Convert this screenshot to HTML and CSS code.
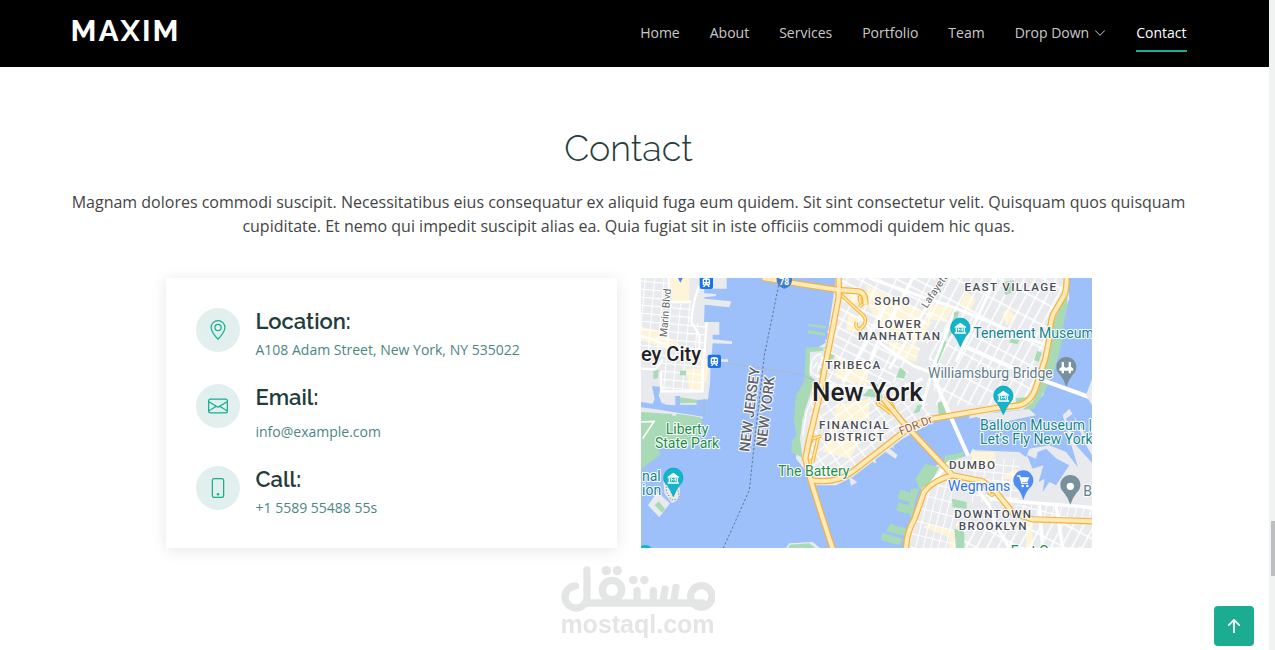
FILE: index.html
```html
<!DOCTYPE html>
<html lang="en">
<head>
    <meta charset="UTF-8">
    <meta name="viewport" content="width=device-width, initial-scale=1.0">
    <title>Maxim - Contact</title>
    <link rel="stylesheet" href="styles.css">
</head>
<body>
<div class="page">
    <header class="header">
        <div class="container header-inner">
            <a href="#" class="logo">MAXIM</a>
            <nav class="navbar">
                <a href="#hero">Home</a>
                <a href="#about">About</a>
                <a href="#services">Services</a>
                <a href="#portfolio">Portfolio</a>
                <a href="#team">Team</a>
                <a href="#more">Drop Down
                    <svg class="chevron" viewBox="0 0 16 16" fill="currentColor"><path d="M1.646 4.646a.5.5 0 0 1 .708 0L8 10.293l5.646-5.647a.5.5 0 0 1 .708.708l-6 6a.5.5 0 0 1-.708 0l-6-6a.5.5 0 0 1 0-.708z"/></svg>
                </a>
                <a href="#contact" class="active">Contact</a>
            </nav>
        </div>
    </header>

    <main>
        <section id="contact" class="contact container">
            <div class="section-title">
                <h2>Contact</h2>
                <p>Magnam dolores commodi suscipit. Necessitatibus eius consequatur ex aliquid fuga eum quidem. Sit sint consectetur velit. Quisquam quos quisquam cupiditate. Et nemo qui impedit suscipit alias ea. Quia fugiat sit in iste officiis commodi quidem hic quas.</p>
            </div>

            <div class="row">
                <div class="info">
                    <div class="info-item">
                        <span class="icon"><svg viewBox="0 0 16 16" fill="currentColor"><path d="M12.166 8.94c-.524 1.062-1.234 2.12-1.96 3.07A31.493 31.493 0 0 1 8 14.58a31.481 31.481 0 0 1-2.206-2.57c-.726-.95-1.436-2.008-1.96-3.07C3.304 7.867 3 6.862 3 6a5 5 0 0 1 10 0c0 .862-.305 1.867-.834 2.94zM8 16s6-5.686 6-10A6 6 0 0 0 2 6c0 4.314 6 10 6 10z"/><path d="M8 8a2 2 0 1 1 0-4 2 2 0 0 1 0 4zm0 1a3 3 0 1 0 0-6 3 3 0 0 0 0 6z"/></svg></span>
                        <div>
                            <h4>Location:</h4>
                            <p>A108 Adam Street, New York, NY 535022</p>
                        </div>
                    </div>
                    <div class="info-item">
                        <span class="icon"><svg viewBox="0 0 16 16" fill="currentColor"><path d="M0 4a2 2 0 0 1 2-2h12a2 2 0 0 1 2 2v8a2 2 0 0 1-2 2H2a2 2 0 0 1-2-2V4zm2-1a1 1 0 0 0-1 1v.217l7 4.2 7-4.2V4a1 1 0 0 0-1-1H2zm13 2.383-4.708 2.825L15 11.105V5.383zm-.034 6.876-5.64-3.471L8 9.583l-1.326-.795-5.64 3.47A1 1 0 0 0 2 13h12a1 1 0 0 0 .966-.741zM1 11.105l4.708-2.897L1 5.383v5.722z"/></svg></span>
                        <div>
                            <h4>Email:</h4>
                            <p class="mail"><a href="mailto:info@example.com">info@example.com</a></p>
                        </div>
                    </div>
                    <div class="info-item">
                        <span class="icon"><svg viewBox="0 0 16 16" fill="currentColor"><path d="M11 1a1 1 0 0 1 1 1v12a1 1 0 0 1-1 1H5a1 1 0 0 1-1-1V2a1 1 0 0 1 1-1h6zM5 0a2 2 0 0 0-2 2v12a2 2 0 0 0 2 2h6a2 2 0 0 0 2-2V2a2 2 0 0 0-2-2H5z"/><path d="M8 14a1 1 0 1 0 0-2 1 1 0 0 0 0 2z"/></svg></span>
                        <div>
                            <h4>Call:</h4>
                            <p>+1 5589 55488 55s</p>
                        </div>
                    </div>
                </div>

                <svg class="map" viewBox="15 18 1353 810" preserveAspectRatio="xMidYMid slice">
                    <defs>
                        <pattern id="gridA" width="44" height="26" patternUnits="userSpaceOnUse" patternTransform="rotate(27)"><path d="M0 0H44M0 0V26" stroke="#fff" stroke-width="8" fill="none"/></pattern>
                        <pattern id="gridB" width="28" height="62" patternUnits="userSpaceOnUse" patternTransform="rotate(28)"><path d="M0 0H28M0 0V62" stroke="#fff" stroke-width="9" fill="none"/></pattern>
                        <pattern id="gridC" width="38" height="26" patternUnits="userSpaceOnUse" patternTransform="rotate(-36)"><path d="M0 0H38M0 0V26" stroke="#fff" stroke-width="7" fill="none"/></pattern>
                        <pattern id="gridD" width="28" height="24" patternUnits="userSpaceOnUse" patternTransform="rotate(5)"><path d="M0 0H28M0 0V24" stroke="#fff" stroke-width="6" fill="none"/></pattern>
                        <pattern id="gridE" width="22" height="40" patternUnits="userSpaceOnUse" patternTransform="rotate(14)"><path d="M0 0H22M0 0V40" stroke="#fff" stroke-width="6" fill="none"/></pattern>
                        <clipPath id="mh"><path d="M612 18H1280L1282 60 1238 150 1232 220 1200 310 1170 390 1130 400 880 440 800 480 640 605 560 625 510 600 490 540 500 420 530 330 560 240z"/></clipPath>
                        <clipPath id="bk"><path d="M812 828 826 760 870 660 930 615 1000 620 1010 560 1150 560 1160 690 1368 700V828z"/></clipPath>
                        <g id="highways" fill="none" stroke-linejoin="round">
                            <path d="M380 18Q500 38 608 54L668 58Q690 62 688 98"/>
                            <path d="M608 18V75L592 160 572 260 548 385 520 500 508 560 524 625Q560 740 590 830"/>
                            <path d="M524 625Q600 636 648 600L790 490Q840 450 890 440L1080 408 1150 400Q1184 390 1198 352L1228 260 1240 200Q1242 150 1252 126L1285 70Q1292 50 1292 18"/>
                            <path d="M740 378 800 450 950 610 1040 628 1080 660 1132 724 1190 742 1368 748"/>
                            <path d="M950 610Q890 625 864 660L836 740Q812 780 810 830"/>
                        </g>
                        <g id="ramps" fill="none">
                            <path d="M612 66 680 128Q694 142 684 160L672 172"/>
                            <path d="M556 492 528 500 512 545M546 500 530 570M522 560 522 600M735 380Q715 395 735 402L765 425M748 382Q780 400 772 425M675 92Q665 78 676 70M670 105 686 90M662 150Q655 165 670 172M1044 640Q1075 690 1070 655"/>
                        </g>
                        <g id="museum">
                            <path d="M0 54Q-8 34-18 20A29 29 0 1 1 18 20Q8 34 0 54z" fill="#12b5cb" stroke="#0b9bb0" stroke-width="2"/>
                            <path d="M-17-6 0-18 17-6V-3H-17zM-14-2H-10V11H-14zM10-2H14V11H10zM-17 11H17V15H-17z" fill="#fff"/>
                            <path d="M-6 8V-1L0 5 6-1V8" fill="none" stroke="#fff" stroke-width="3"/>
                        </g>
                        <g id="train">
                            <rect x="-20" y="-20" width="40" height="40" rx="6" fill="#1a73e8"/>
                            <path d="M-11 6V-8Q-11-13 0-13T11-8V6Q11 9 7 9L11 14H6L2 9H-2L-6 14H-11L-7 9Q-11 9-11 6z" fill="#fff"/>
                            <path d="M-7-7H-2V-1H-7zM2-7H7V-1H2z" fill="#1a73e8"/>
                            <circle cx="-5" cy="4" r="2" fill="#1a73e8"/><circle cx="5" cy="4" r="2" fill="#1a73e8"/>
                        </g>
                    </defs>

                    <!-- water -->
                    <rect x="15" y="18" width="1353" height="810" fill="#9dc0fa"/>

                    <!-- Jersey City -->
                    <path fill="#e8eaed" d="M15 18H272V50H205L204 64 240 66V72L204 76 206 80 286 88 280 106 206 98 204 150H250V188H230V202L288 208V216L230 214 226 262H276V270H224L222 335 216 382 180 384 182 398H132V372H118V400L92 398 76 392 68 370 76 345 48 342 56 380 50 395 15 390z"/>
                    <path fill="#fef5d8" d="M98 18H160V88H110zM15 165 80 180 130 220 110 235 15 205zM150 290H195V355H160zM180 262H222L210 330 196 325V270zM130 235H200V262H130z"/>
                    <path fill="url(#gridD)" d="M15 18H95L100 95 165 95V150L208 158V255L15 260zM75 262H200V360H75z"/>
                    <path fill="none" stroke="#fff" stroke-width="7" d="M190 40Q170 90 166 150L190 190V250M15 190 110 225 210 235M15 290 60 292 80 262M98 18 100 90H165M212 150 204 260M75 300V358H200V262"/>
                    <path fill="#a8dab5" d="M52 298 68 292 66 318 52 322zM132 296H150V310H132zM132 376 186 384 182 392 132 394z"/>
                    <path fill="#4285f4" d="M126 18H140L133 32z"/>

                    <!-- Liberty State Park -->
                    <path fill="#e8eaed" d="M15 406 60 412 200 434V440L15 424z"/>
                    <path fill="#a8dab5" d="M15 420 108 426 112 436 124 425 194 436 198 450 180 520 60 525 76 545 15 592z"/>
                    <path fill="none" stroke="#fff" stroke-width="5" d="M15 450 54 448 20 500"/>
                    <path fill="#e8eaed" d="M64 660 102 694 70 736 36 700zM82 630 112 622 132 650 130 680 108 694 86 665z"/>
                    <path fill="#a8dab5" d="M68 688 88 712 78 722 56 700z"/>
                    <path fill="none" stroke="#666" stroke-width="3" stroke-dasharray="3 6" d="M90 635 92 660 106 684 130 680 126 655"/>
                    <path fill="#e8eaed" d="M450 828 460 814 530 810 552 828z"/>
                    <path fill="#a8dab5" d="M456 828 462 818 520 814 538 828z"/>

                    <!-- Manhattan -->
                    <path fill="#e8eaed" d="M600 18H1292L1300 80 1270 160 1262 220 1240 290 1222 370 1180 412 1080 420 1000 440 1000 425 900 445 800 500 650 615 600 640 540 640 512 600 480 560 485 460 500 340 540 230 572 210z"/>
                    <path fill="#a8dab5" d="M510 226H574L560 300 530 330 520 400 500 440 492 500 500 560 512 590 496 556 466 540 468 505 482 490 474 445 480 370 504 330zM516 155 570 162V170L514 162zM516 174 568 184V192L514 184zM1294 60 1294 105 1282 160 1276 220 1256 290 1240 330 1216 375 1192 412 1160 412 1190 390 1232 270 1248 160z"/>
                    <path fill="#e8eaed" d="M522 240 566 236 545 330 520 310zM528 350 550 352 520 480 498 480 505 420z"/>
                    <path fill="none" stroke="#fff" stroke-width="4" d="M556 246Q522 250 524 300L546 316M545 270 530 290M540 350 512 420 500 490"/>
                    <path fill="#fef5d8" d="M625 60H655L670 90 640 100zM690 40 860 120 840 220 740 170 700 110zM880 90 950 110 930 150 870 140zM760 205 850 230 840 270 760 245zM600 400 700 380 700 440 620 450 590 500zM580 490 690 480 640 560 560 540zM600 250 700 290 690 340 600 320zM990 60 1020 80 1000 120 970 100zM1100 120 1120 110 1140 140 1110 160zM820 130 890 150 850 210 810 190zM640 120 665 140V180L630 175z"/>
                    <g clip-path="url(#mh)">
                        <path fill="url(#gridA)" d="M560 18H900L870 200 800 330 540 350z"/>
                        <path fill="url(#gridB)" d="M890 18H1292L1232 240 1190 400 900 400 870 200z"/>
                        <path fill="url(#gridC)" d="M530 340 850 330 890 440 640 610 500 610z"/>
                    </g>
                    <path fill="#a8dab5" d="M955 120 970 118 950 180 935 200zM925 205 932 210 905 275 895 270zM1098 30 1135 25 1130 60 1108 70zM1125 200 1150 205 1145 216 1120 212zM1204 236 1218 242 1208 270 1194 264zM700 350 720 332 735 350 740 378 680 372zM792 286 810 300 804 320 780 316zM845 400 860 396 850 420 832 425zM905 392 925 386 930 425 908 428zM1140 378 1185 374 1170 396 1140 392zM580 245 596 250 590 262 574 262z"/>
                    <path fill="none" stroke="#fff" stroke-width="9" d="M700 18 860 75 950 105 1230 220M760 80 700 200 620 330M668 130 740 220 830 280 880 300M950 130 890 290 860 400M830 18 720 220 690 300M900 60 760 290M1080 18 960 270M560 340 790 350 860 320"/>
                    <path fill="none" stroke="#fff" stroke-width="12" d="M980 220 1180 310 1368 378M888 300 920 380 1000 560 1060 700"/>

                    <!-- piers -->
                    <path fill="#e8eaed" d="M735 530 750 520 785 550 778 560zM752 515 765 505 775 530zM640 615 664 630 645 642zM705 550 722 570 715 574 700 556z"/>

                    <!-- Brooklyn -->
                    <path fill="#e8eaed" d="M800 828 830 740 860 640 900 580 960 560 1000 550 1010 530 1020 535 1150 540 1170 556 1180 530 1240 520 1290 540 1368 640V828zM1280 430 1300 410 1368 520V640L1330 600zM1000 430 1180 412 1200 430 1100 450 1040 440zM1368 320 1350 370 1368 400z"/>
                    <path fill="#fef5d8" d="M1005 540 1078 540 1070 590 1010 580zM860 765 880 755 960 780 950 800zM1140 590 1150 620 1090 620zM940 790 975 800 970 828H940zM1170 750H1190V828H1170z"/>
                    <path fill="#9dc0fa" d="M1172 548 1200 560 1205 540 1230 530 1262 560 1300 580 1260 640 1240 630 1220 660 1226 620 1208 630 1222 580 1190 590zM1290 440 1310 425 1350 520 1368 550V572L1320 520z"/>
                    <g clip-path="url(#bk)">
                        <path fill="url(#gridE)" d="M800 620H960V828H800zM1120 700H1368V735H1150z"/>
                        <path fill="url(#gridD)" d="M1000 560H1150V690H1000z"/>
                        <path fill="url(#gridB)" d="M960 750H1368V828H960z"/>
                    </g>
                    <path fill="#a8dab5" d="M838 620 868 575 910 585 880 640 850 650zM926 552 985 540 980 555 940 570 920 590zM792 652 830 665 820 690 785 680zM788 690 826 704 812 725 780 715zM826 650 850 650 836 690 830 740 815 720zM762 755 812 770 806 792 752 778zM738 782 800 800 790 820 735 805zM948 680 992 690V710L950 706zM955 770 985 780V828H960z"/>
                    <path fill="none" stroke="#fff" stroke-width="10" d="M1000 620 1060 700 1080 760 1120 828M1060 680 1160 690 1368 706M1210 700 1220 828M1260 700 1280 828M940 570 880 640"/>

                    <!-- tunnel, ferry and state lines -->
                    <path fill="none" stroke="#a9b8cc" stroke-width="3" d="M254 270 400 292 500 308 540 330M204 380V440"/>
                    <path fill="none" stroke="#5f7592" stroke-width="3" stroke-dasharray="7 6" d="M428 40 385 250 350 560 340 655 262 828"/>

                    <use href="#ramps" stroke="#fbb52e" stroke-width="11"/>
                    <use href="#ramps" stroke="#ffeab0" stroke-width="5"/>
                    <use href="#highways" stroke="#f7b137" stroke-width="19"/>
                    <use href="#highways" stroke="#ffeab8" stroke-width="12"/>

                    <!-- markers -->
                    <use href="#train" x="211" y="31"/>
                    <use href="#train" x="235" y="268"/>
                    <path fill="#3f7fc8" d="M422 18H468V26Q466 44 445 50 425 44 422 26z"/>
                    <use href="#museum" x="973" y="170"/>
                    <use href="#museum" x="1102" y="374"/>
                    <use href="#museum" x="112" y="620"/>
                    <ellipse cx="28" cy="832" rx="18" ry="13" fill="#12b5cb"/>
                    <g fill="#78909c">
                        <path d="M1291 344Q1284 322 1272 308A30 30 0 1 1 1310 308Q1298 322 1291 344z"/>
                        <path d="M1303 698Q1296 676 1284 662A30 30 0 1 1 1322 662Q1310 676 1303 698z"/>
                    </g>
                    <path fill="#fff" d="M1277 270H1284V284Q1291 290 1298 284V270H1305V284L1312 290V296H1305V304H1298V296H1284V304H1277V296H1270V290L1277 284z"/>
                    <circle cx="1303" cy="643" r="11" fill="#fff"/>
                    <path fill="#4f8df5" d="M1162 684Q1155 660 1143 648A30 30 0 1 1 1181 648Q1169 660 1162 684z"/>
                    <path fill="none" stroke="#fff" stroke-width="4" d="M1143 612H1151L1158 634H1176"/>
                    <path fill="#fff" d="M1152 616H1180L1174 630H1157z"/>
                    <circle cx="1160" cy="642" r="4" fill="#fff"/><circle cx="1174" cy="642" r="4" fill="#fff"/>

                    <!-- labels -->
                    <text class="shield" x="445" y="38" text-anchor="middle">78</text>
                    <g class="area" text-anchor="middle">
                        <text x="770" y="99">SOHO</text>
                        <text x="791" y="168">LOWER</text>
                        <text x="791" y="204">MANHATTAN</text>
                        <text x="1125" y="57">EAST VILLAGE</text>
                        <text x="652" y="291">TRIBECA</text>
                        <text x="656" y="471">FINANCIAL</text>
                        <text x="656" y="507">DISTRICT</text>
                        <text x="1010" y="591">DUMBO</text>
                        <text x="1072" y="738">DOWNTOWN</text>
                        <text x="1072" y="774">BROOKLYN</text>
                    </g>
                    <text class="place green" x="1124" y="852">Fort Greene</text>
                    <text class="city" x="528" y="386">New York</text>
                    <text class="town" x="15" y="267">ey City</text>
                    <g class="street">
                        <text transform="translate(92 196) rotate(-85)">Marin Blvd</text>
                        <text transform="translate(872 110) rotate(-56)">Lafayette</text>
                    </g>
                    <text class="fdr" transform="translate(795 490) rotate(-22)">FDR Dr</text>
                    <g class="state">
                        <text transform="translate(340 541) rotate(-83)">NEW JERSEY</text>
                        <text transform="translate(390 526) rotate(-83)">NEW YORK</text>
                    </g>
                    <g class="place green">
                        <text x="153" y="486" text-anchor="middle">Liberty</text>
                        <text x="153" y="528" text-anchor="middle">State Park</text>
                        <text x="426" y="612">The Battery</text>
                    </g>
                    <g class="place teal">
                        <text x="1012" y="199">Tenement Museum</text>
                        <text x="1032" y="474">Balloon Museum |</text>
                        <text x="1032" y="516">Let's Fly New York</text>
                        <text x="18" y="627">nal</text>
                        <text x="18" y="669">ion</text>
                    </g>
                    <g class="place slate">
                        <text x="876" y="318">Williamsburg Bridge</text>
                        <text x="1342" y="672">B</text>
                    </g>
                    <text class="place blue" x="936" y="657">Wegmans</text>
                </svg>
            </div>
        </section>
    </main>

    <a href="#" class="back-to-top" aria-label="Back to top"><svg viewBox="0 0 16 16" fill="currentColor"><path d="M8 12a.5.5 0 0 0 .5-.5V5.707l2.146 2.147a.5.5 0 0 0 .708-.708l-3-3a.5.5 0 0 0-.708 0l-3 3a.5.5 0 1 0 .708.708L7.5 5.707V11.5a.5.5 0 0 0 .5.5z"/></svg></a>
</div>

<div class="scrollbar"><div class="thumb"></div></div>

<div class="watermark">
    <svg viewBox="60 30 465 141" fill="none" stroke="#e4e6e5" stroke-width="22" stroke-linecap="round">
        <path d="M106 93A33 33 0 1 0 141 128V45M138 144H488M291 144V107M340 144V107M368 144 375 102M401 144 408 97"/>
        <circle cx="216" cy="105" r="29"/>
        <circle cx="484" cy="124" r="32"/>
        <g fill="#e4e6e5" stroke="none"><circle cx="199" cy="47" r="14"/><circle cx="232" cy="47" r="14"/><circle cx="280" cy="75" r="13"/><circle cx="313" cy="75" r="13"/></g>
    </svg>
    <span>mostaql.com</span>
</div>
</body>
</html>
```

FILE: styles.css
```css
* {
    box-sizing: border-box;
}
body {
    margin: 0;
    display: flex;
    min-height: 100vh;
    font-family: "Open Sans", sans-serif;
    color: #444444;
    background-color: #fff;
}
a {
    text-decoration: none;
    color: inherit;
}
h2, h4, p {
    margin: 0;
}
.page {
    flex: 1;
    min-width: 0;
}
.container {
    max-width: 1140px;
    margin: 0 auto;
    padding: 0 12px;
}

/* header */
.header {
    background-color: #000;
    padding-right: 12px;
}
.header-inner {
    display: flex;
    justify-content: space-between;
    align-items: center;
    height: 67px;
}
.logo {
    font-family: Raleway, Lato, sans-serif;
    font-size: 30px;
    font-weight: 700;
    line-height: 36px;
    letter-spacing: 2px;
    color: #fff;
    padding-bottom: 6px;
}
.navbar {
    display: flex;
    gap: 30px;
}
.navbar a {
    display: flex;
    align-items: center;
    font-size: 14px;
    line-height: 20px;
    padding: 8px 0 7px;
    white-space: nowrap;
    color: rgba(255, 255, 255, 0.8);
    border-bottom: 2px solid transparent;
}
.navbar .active {
    color: #fff;
    border-color: #1bac91;
}
.chevron {
    width: 12px;
    height: 12px;
    margin-left: 5px;
}

/* contact */
main {
    padding-right: 12px;
}
.contact {
    padding-top: 60px;
    padding-bottom: 60px;
}
.section-title {
    text-align: center;
    margin-bottom: 40px;
}
.section-title h2 {
    font-family: Raleway, Lato, sans-serif;
    font-size: 36px;
    font-weight: 300;
    line-height: 43px;
    margin-bottom: 20px;
    color: #1f3d3b;
}
.section-title p {
    font-size: 16px;
    line-height: 24px;
}
.row {
    display: grid;
    grid-template-columns: 1fr 1fr;
    gap: 24px;
    padding: 0 95px;
}
.info {
    padding: 30px;
    display: flex;
    flex-direction: column;
    gap: 24px;
    background-color: #fff;
    box-shadow: 0 2px 15px rgba(0, 0, 0, 0.1);
}
.info-item {
    display: flex;
    gap: 16px;
}
.icon {
    flex: none;
    display: flex;
    justify-content: center;
    align-items: center;
    width: 44px;
    height: 44px;
    border-radius: 50%;
    background-color: #e1f0ee;
    color: #1bac91;
}
.icon svg {
    width: 20px;
    height: 20px;
}
.info h4 {
    font-family: Raleway, Lato, sans-serif;
    font-size: 22px;
    font-weight: 600;
    line-height: 26px;
    margin-bottom: 5px;
    color: #1f3d3b;
}
.info p {
    font-size: 14px;
    line-height: 21px;
    color: #4b8783;
}
.info .mail {
    margin-top: 11px;
}

/* map */
.map {
    display: block;
    width: 100%;
    height: 100%;
    min-height: 270px;
    font-family: Roboto, sans-serif;
}
.map text {
    paint-order: stroke;
    stroke: #fff;
    stroke-width: 6px;
    stroke-linejoin: round;
}
.area {
    font-size: 35px;
    font-weight: 500;
    letter-spacing: 4px;
    fill: #4a4d55;
}
.city {
    font-size: 78px;
    font-weight: 500;
    fill: #202124;
}
.town {
    font-size: 60px;
    font-weight: 500;
    fill: #202124;
}
.street {
    font-size: 31px;
    fill: #5f6368;
}
.fdr {
    font-size: 34px;
    fill: #9a5a2a;
}
.state {
    font-size: 43px;
    font-weight: 500;
    fill: #5f6368;
}
.place {
    font-size: 42px;
}
.green {
    fill: #1e8e4a;
}
.teal {
    fill: #128391;
}
.slate {
    fill: #607d8b;
}
.blue {
    fill: #2f73e8;
}
.map .shield {
    font-size: 26px;
    font-weight: 700;
    fill: #fff;
    stroke: none;
}

.back-to-top {
    position: fixed;
    right: 21px;
    bottom: 4px;
    display: flex;
    justify-content: center;
    align-items: center;
    width: 40px;
    height: 40px;
    border-radius: 4px;
    background-color: #1bac91;
    color: #fff;
}
.back-to-top svg {
    width: 28px;
    height: 28px;
}

.scrollbar {
    width: 6px;
    padding-top: 521px;
    background-color: #f1f2f2;
}
.thumb {
    height: 55px;
    margin-left: 2px;
    background-color: #bcbec0;
}

.watermark {
    position: fixed;
    left: 0;
    right: 0;
    bottom: 14px;
    display: flex;
    flex-direction: column;
    align-items: center;
    pointer-events: none;
    font-family: "Liberation Sans", Arial, sans-serif;
    font-size: 25px;
    font-weight: 700;
    line-height: 24px;
    color: #e4e6e5;
}
.watermark svg {
    width: 155px;
    height: 47px;
}
```
